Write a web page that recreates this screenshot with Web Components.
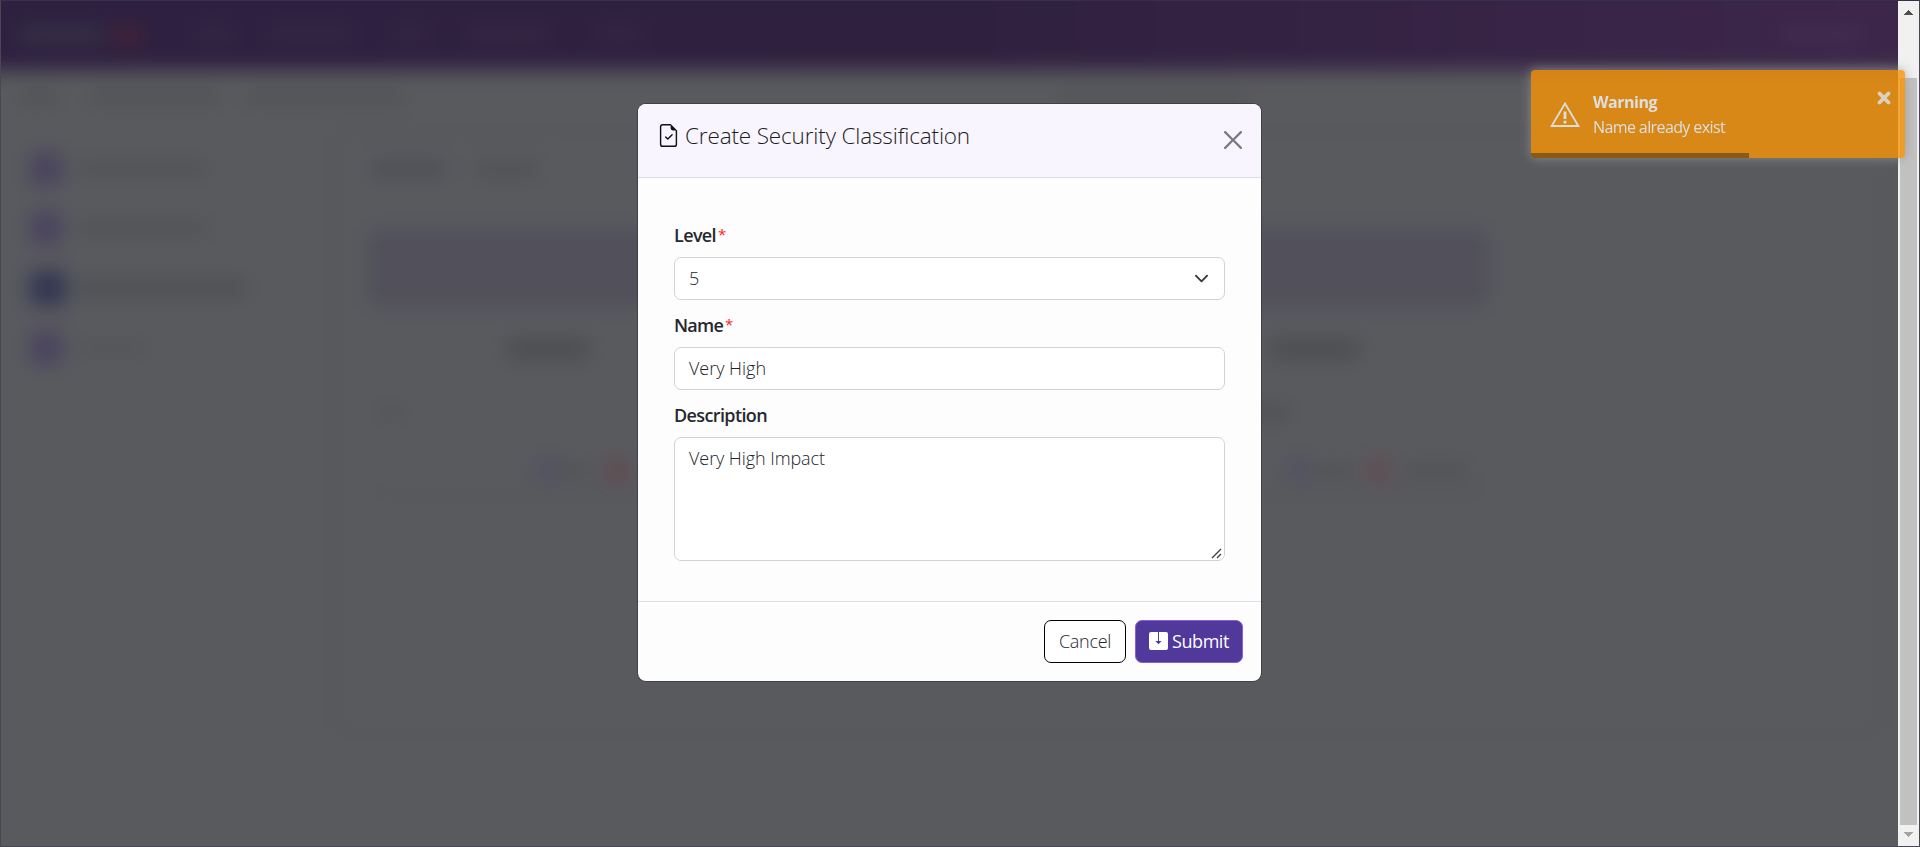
<!DOCTYPE html>
<html lang="en">
<head>
<meta charset="utf-8">
<title>Create Security Classification</title>
<style>
html,body{margin:0;height:100%;overflow:hidden}
body{font-family:"Open Sans","Noto Sans",sans-serif;background:#58595d;color:#212529}
</style>
</head>
<body>
<app-shell></app-shell>
<script>
function define(name, html, init) {
  const t = document.createElement('template');
  t.innerHTML = html;
  customElements.define(name, class extends HTMLElement {
    connectedCallback() {
      if (this.shadowRoot) return;
      this.attachShadow({mode: 'open'}).append(t.content.cloneNode(true));
      if (init) init.call(this, this.shadowRoot);
    }
  });
}

/* Text run tracked so that it occupies the given advance width. */
define('fit-text', `<style>:host{display:inline-block;white-space:nowrap}</style><span><slot></slot></span>`, function (root) {
  const span = root.querySelector('span'), n = this.textContent.length;
  const w = span.getBoundingClientRect().width;
  span.style.letterSpacing = ((+this.getAttribute('w') - w) / n).toFixed(3) + 'px';
});

/* Defocused stand-in for page content behind the dialog. */
define('soft-bar', `<style>:host{display:block;flex:none;border-radius:4px}</style>`, function () {
  const a = k => this.getAttribute(k);
  this.style.width = a('w') + 'px';
  this.style.height = (a('h') || 12) + 'px';
  this.style.background = a('c') || '#505154';
  if (a('l')) this.style.marginLeft = a('l') + 'px';
});

define('page-backdrop', `<style>
:host{display:block;overflow:hidden;height:847px;background:#58595d}
.in{margin:-30px;padding:0;filter:blur(10px);height:907px;background:#595a5e}
.nav{height:100px;box-sizing:border-box;padding:58px 0 0 48px;display:flex;background:linear-gradient(90deg,#2d2040,#30203f 50%,#3d274b)}
.crumb{display:flex;padding:22px 0 0 48px;height:38px}
.main{display:flex}
.side{width:330px;flex:none;padding:23px 0 0 60px;box-sizing:border-box;display:flex;flex-direction:column;gap:27px;height:600px}
.row{display:flex;align-items:center}
.card{width:1550px;flex:none;height:603px;box-sizing:border-box;border:5px solid #555659;border-radius:12px;padding:24px 0 0 30px;margin-left:33px}
</style><div class="in">
<div class="nav"><soft-bar w="86" c="#383548" h="14"></soft-bar><soft-bar w="30" l="8" h="16" c="#482436"></soft-bar>
<soft-bar w="44" l="50" c="#352745"></soft-bar><soft-bar w="90" l="28" c="#352745"></soft-bar><soft-bar w="36" l="38" c="#372745"></soft-bar><soft-bar w="80" l="40" c="#372945"></soft-bar><soft-bar w="50" l="46" c="#382745"></soft-bar><soft-bar w="82" l="1135" c="#443052"></soft-bar></div>
<div class="crumb"><soft-bar w="40"></soft-bar><soft-bar w="134" l="30"></soft-bar><soft-bar w="160" l="24"></soft-bar><soft-bar w="190" l="650" c="#525356"></soft-bar></div>
<div class="main">
<div class="side">
<div class="row"><soft-bar w="32" h="32" c="#49425e"></soft-bar><soft-bar w="130" l="16"></soft-bar></div>
<div class="row"><soft-bar w="32" h="32" c="#49425e"></soft-bar><soft-bar w="130" l="16"></soft-bar></div>
<div class="row"><soft-bar w="36" h="34" c="#333553"></soft-bar><soft-bar w="168" l="12" c="#4b4c4f"></soft-bar></div>
<div class="row"><soft-bar w="32" h="32" c="#49425e"></soft-bar><soft-bar w="68" l="16" c="#535457"></soft-bar></div>
</div>
<div class="card">
<div class="row" style="height:20px"><soft-bar w="76" l="2" h="14" c="#4d4e55"></soft-bar><soft-bar w="66" l="28" h="14"></soft-bar></div>
<div style="height:50px"></div>
<soft-bar w="1120" h="78" c="#51505b"></soft-bar>
<div class="row" style="height:84px"><soft-bar w="84" l="138" h="18" c="#4b4c4e"></soft-bar><soft-bar w="90" l="680" h="18" c="#4b4c4e"></soft-bar></div>
<div class="row" style="height:44px"><soft-bar w="22" l="12" c="#525356"></soft-bar><soft-bar w="80" l="807" c="#4d4e50"></soft-bar></div>
<div class="row" style="height:70px;margin-bottom:-15px"><soft-bar w="22" l="168" h="24" c="#515162"></soft-bar><soft-bar w="28" l="4"></soft-bar><soft-bar w="22" l="16" h="24" c="#624a4f"></soft-bar><soft-bar w="22" l="660" h="24" c="#515162"></soft-bar><soft-bar w="38" l="6"></soft-bar><soft-bar w="20" l="14" h="24" c="#624a4f"></soft-bar><soft-bar w="64" l="16"></soft-bar></div>
<soft-bar w="1110" l="6" h="5" c="#545558"></soft-bar>
</div></div></div>`);

define('window-scrollbar', `<style>
:host{display:flex;flex-direction:column;align-items:center;width:21px;height:845px;background:#f1f1f1}
svg{display:block;flex:none}
.thumb{width:17px;height:747px;margin:62px 0 7px;background:#c1c1c1}
</style>
<svg width="9" height="6" style="margin-top:9px" shape-rendering="crispEdges"><path d="M4.5 0 9 5H0z" fill="#505050"/></svg>
<div class="thumb"></div>
<svg width="9" height="6" shape-rendering="crispEdges"><path d="M0 0h9L4.5 5z" fill="#a3a3a3"/></svg>`);

define('toast-message', `<style>
:host{display:flex;flex-direction:column;width:373.5px;height:88px;background:#f89406;border-radius:4px;box-shadow:0 0 12px #999;opacity:.8;color:#fff;overflow:hidden;font-size:16px}
.c{display:flex;flex:1;padding-left:19px}
.t{padding:20px 0 0 13px;line-height:25px}
.i{margin-top:31px}
b{display:block;font-weight:700}
.x{margin:21px 14px 0 auto;opacity:.85}
.p{height:5px;width:218px;background:#000;opacity:.4}
svg{display:block}
</style><div class="c">
<svg class="i" width="30" height="27" viewBox="0 0 30 27" fill="none" stroke="#fff" stroke-width="1.8"><path d="M15 2.5 28.4 25H1.6z"/><path d="M15 10.5v7.6" stroke-width="2.8"/><path d="M15 19.8v2.6" stroke-width="2.8"/></svg>
<div class="t"><b><fit-text w="64">Warning</fit-text></b><fit-text w="132">Name already exist</fit-text></div>
<svg class="x" width="14" height="14" viewBox="0 0 14 14"><path d="M2.5 2.5l9 9M11.5 2.5l-9 9" stroke="#fff" stroke-width="3.8" stroke-linecap="round"/></svg>
</div><div class="p"></div>`);

define('form-field', `<style>
:host{display:block}
.l{display:flex;font-size:18px;line-height:27px;font-weight:600;margin-bottom:8px;color:#26282d}
.b{display:flex;justify-content:space-between;box-sizing:border-box;height:var(--h,43px);border:1px solid #ced4da;border-radius:7px;background:#fff;padding:7px 14px;font-size:18px;line-height:27px;font-weight:300;color:#212529;position:relative}
</style><div class="l"><slot name="label"></slot></div><div class="b"><slot></slot></div>`);

define('action-button', `<style>
:host{display:flex;box-sizing:border-box;height:43px;border:1px solid #000;border-radius:7px;background:#fff;padding:7px 14px;font-size:18px;line-height:27px;color:#212529;font-weight:300;white-space:nowrap}
:host([primary]){background:#51389b;border-color:#8b5ce0;color:#fff;font-weight:400;padding:7px 13px}
</style><slot></slot>`);

define('modal-dialog', `<style>
:host{display:block;width:623px;height:577px;background:#fdfdfd;border-radius:8px;overflow:hidden;box-shadow:0 0 0 1px rgba(50,50,55,.6)}
.h{display:flex;height:73px;background:#f8f5ff;border-bottom:1px solid #dbdee5;padding-left:19px}
.h .i{margin-top:20px}
.h fit-text{font-size:22.5px;line-height:34px;font-weight:350;margin:15px 0 0 5px;color:#1c1c20}
.h .x{margin:27px 19px 0 auto}
.b{height:423px;box-sizing:border-box;padding:44px 36px 0;display:flex;flex-direction:column;gap:12px}
.f{display:flex;justify-content:flex-end;gap:9px;border-top:1px solid #dee0e4;padding:18px}
.r{color:#f22;font-size:15px;font-weight:400;margin-left:2px;line-height:25px}
.g{position:absolute;right:2px;bottom:1px}
svg{display:block;flex:none}
.ch{margin:6px 1px 0 0}
.s{margin:4px 4px 0 0}
</style>
<div class="h">
<svg class="i" width="23" height="23" viewBox="0 0 16 16" fill="#111"><path d="M10.854 7.854a.5.5 0 0 0-.708-.708L7.5 9.793 6.354 8.646a.5.5 0 1 0-.708.708l1.5 1.5a.5.5 0 0 0 .708 0l3-3z"/><path d="M14 14V4.5L9.5 0H4a2 2 0 0 0-2 2v12a2 2 0 0 0 2 2h8a2 2 0 0 0 2-2zM9.5 3A1.5 1.5 0 0 0 11 4.5h2V14a1 1 0 0 1-1 1H4a1 1 0 0 1-1-1V2a1 1 0 0 1 1-1h5.5v2z"/></svg>
<fit-text w="285">Create Security Classification</fit-text>
<svg class="x" width="18" height="18" viewBox="0 0 16 16" fill="#000" opacity=".5"><path d="M.293.293a1 1 0 0 1 1.414 0L8 6.586 14.293.293a1 1 0 1 1 1.414 1.414L9.414 8l6.293 6.293a1 1 0 0 1-1.414 1.414L8 9.414l-6.293 6.293a1 1 0 0 1-1.414-1.414L6.586 8 .293 1.707a1 1 0 0 1 0-1.414z"/></svg>
</div>
<div class="b">
<form-field><fit-text slot="label" w="42">Level</fit-text><span slot="label" class="r">*</span>
<fit-text w="9">5</fit-text><svg class="ch" width="15" height="15" viewBox="0 0 16 16" fill="none" stroke="#343a40" stroke-width="2" stroke-linecap="round" stroke-linejoin="round"><path d="m2 5 6 6 6-6"/></svg></form-field>
<form-field><fit-text slot="label" w="49">Name</fit-text><span slot="label" class="r">*</span><fit-text w="77">Very High</fit-text></form-field>
<form-field style="--h:124px"><fit-text slot="label" w="93">Description</fit-text><fit-text w="136">Very High Impact</fit-text><svg class="g" width="11" height="11" viewBox="0 0 11 11" stroke="#444" stroke-width="1.4"><path d="M1 10 10 1M6 10l4-4"/></svg></form-field>
</div>
<div class="f"><action-button><fit-text w="52">Cancel</fit-text></action-button>
<action-button primary><svg class="s" width="19" height="18" viewBox="0 0 19 18"><rect width="19" height="18" rx="2" fill="#fff"/><path d="M9 0h1v9h2.6L9.5 12.3 6.4 9H9z" fill="#51389b"/></svg><fit-text w="57">Submit</fit-text></action-button></div>`);

define('app-shell', `<style>
:host{display:grid;width:1920px;height:847px;overflow:hidden;isolation:isolate}
page-backdrop,modal-dialog,toast-message,window-scrollbar,.frame{grid-area:1/1}
page-backdrop{z-index:0}
modal-dialog{z-index:3;margin:104px 0 0 638px}
toast-message{z-index:4;margin:70px 0 0 1531px}
window-scrollbar{z-index:2;margin:1px 0 0 1898px}
.frame{z-index:1;border:1px solid #494754;border-top-color:#37304a}
</style>
<page-backdrop></page-backdrop><div class="frame"></div><window-scrollbar></window-scrollbar><modal-dialog></modal-dialog><toast-message></toast-message>`);
</script>
</body>
</html>
